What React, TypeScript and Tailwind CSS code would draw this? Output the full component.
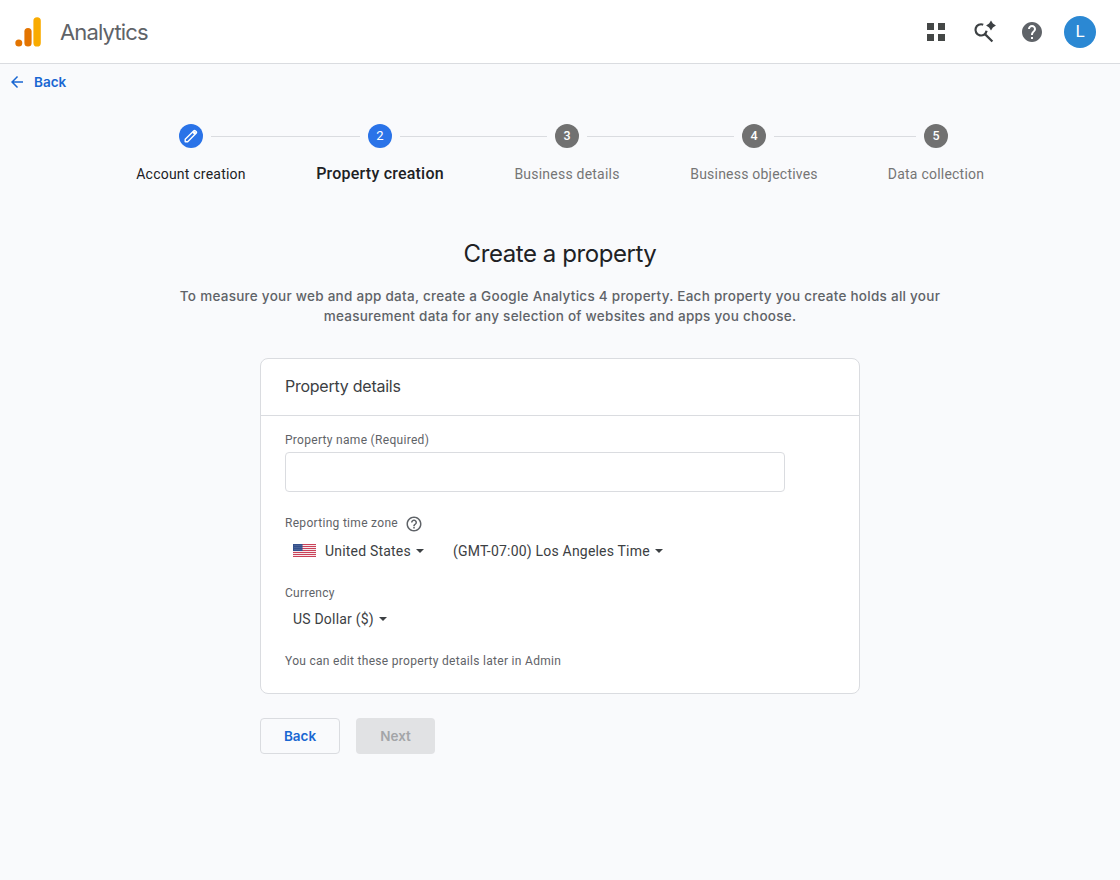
import { MdArrowBack, MdHelp, MdHelpOutline } from "react-icons/md";
import clsx from "clsx";

const STEPS = [
  { label: "Account creation", state: "done", line: "w-[149px]" },
  { label: "Property creation", state: "active", line: "w-[147px]" },
  { label: "Business details", state: "todo", line: "w-[147px]" },
  { label: "Business objectives", state: "todo", line: "w-[142px]" },
  { label: "Data collection", state: "todo", line: "" },
];

function Logo() {
  return (
    <svg width="28" height="32" viewBox="0 0 28 32" className="block">
      <rect x="19.4" y="1.2" width="7.4" height="29.4" rx="3.7" fill="#f9ab00" />
      <rect x="10.4" y="12" width="7.2" height="18.6" rx="3.6" fill="#e37400" />
      <circle cx="4.8" cy="27.1" r="3.5" fill="#e37400" />
    </svg>
  );
}

function AppsIcon() {
  return (
    <svg width="24" height="24" viewBox="0 0 24 24" fill="#444746">
      <path d="M3 3h7v7H3zM14 3h7v7h-7zM3 14h7v7H3zM14 14h7v7h-7z" />
    </svg>
  );
}

function SearchSparkIcon() {
  return (
    <svg width="24" height="24" viewBox="0 0 24 24">
      <path
        d="M11.2 4.7A5.6 5.6 0 1 0 14.6 10.8M13 14.1l7.4 7.4"
        fill="none"
        stroke="#3c4043"
        strokeWidth="2.2"
      />
      <path d="M19 .6l1.9 3 3 2-3 2-1.9 3-1.9-3-3-2 3-2z" fill="#3c4043" />
    </svg>
  );
}

function PencilIcon() {
  return (
    <svg width="14" height="14" viewBox="0 0 14 14" fill="none" stroke="#fff" strokeLinejoin="round">
      <path d="M1.2 12.8V10.3L9.9 1.7a1 1 0 0 1 1.3 0l1.1 1.1a1 1 0 0 1 0 1.3L3.7 12.8z" strokeWidth="1.4" />
      <path d="M9.1 2.7l2.2 2.2" strokeWidth="2.6" />
    </svg>
  );
}

function UsFlag() {
  return (
    <svg width="23" height="13" viewBox="0 0 23 13" className="mb-px block">
      <rect width="23" height="13" fill="#f6e9ec" />
      <path
        d="M0 .5h23M0 2.5h23M0 4.5h23M0 6.5h23M0 8.5h23M0 10.5h23M0 12.5h23"
        stroke="#cb4259"
        strokeWidth="1"
      />
      <rect width="9.5" height="7" fill="#34508c" />
      <path d="M1.5 1.5h7M1.5 3.5h7M1.5 5.5h7" stroke="#8290b4" strokeWidth=".6" strokeDasharray="1 1" />
    </svg>
  );
}

function Caret() {
  return (
    <svg width="8" height="4" viewBox="0 0 8 4" className="block" fill="#3c4043">
      <path d="M0 0h8L4 4z" />
    </svg>
  );
}

function Stepper() {
  return (
    <div className="ml-[179px] mt-6 flex h-[68px] items-start">
      {STEPS.map((step, i) => (
        <div key={step.label} className="flex items-start">
          <div className="flex w-6 flex-col items-center">
            <div
              className={clsx(
                "flex h-6 w-6 items-center justify-center rounded-full text-white",
                step.state === "todo" ? "bg-[#717171] text-[12.5px] font-medium" : "bg-[#2a73e8] text-[13px]"
              )}
            >
              {step.state === "done" ? <PencilIcon /> : i + 1}
            </div>
            <span
              className={clsx(
                "mt-4 whitespace-nowrap leading-5 tracking-[0.22px]",
                step.state === "done" && "text-sm text-[#202124]",
                step.state === "active" && "text-base font-medium text-[#202124]",
                step.state === "todo" && "text-sm text-[#757575]"
              )}
            >
              {step.label}
            </span>
          </div>
          {step.line && <div className={clsx("mx-2 mt-3 h-px bg-[#dadce0]", step.line)} />}
        </div>
      ))}
    </div>
  );
}

export default function App() {
  return (
    <div className="h-[880px] w-[1120px] overflow-hidden bg-[#f9fafc] font-['Roboto',sans-serif] text-[#3c4043]">
      {/* Header */}
      <header className="flex h-16 items-center border-b border-[#dadce0] bg-white pl-[14px] pr-6">
        <Logo />
        <span className="ml-[18px] font-['Inter',sans-serif] text-[22px] leading-7 tracking-[-0.85px] text-[#5f6368]">
          Analytics
        </span>
        <div className="ml-auto flex items-center gap-6">
          <AppsIcon />
          <SearchSparkIcon />
          <MdHelp size={24} className="text-[#5f6368]" />
          <div className="ml-[-4px] flex h-8 w-8 items-center justify-center rounded-full bg-[#2b88d3] pt-px text-[17px] text-white">
            L
          </div>
        </div>
      </header>

      <div className="flex h-9 items-center pl-2 text-[#1967d2]">
        <MdArrowBack size={18} />
        <span className="ml-2 font-['Inter',sans-serif] text-[13.5px] font-semibold">Back</span>
      </div>

      <Stepper />

      {/* Intro */}
      <div className="mt-[46px] flex flex-col items-center text-center font-['Inter',sans-serif]">
        <h1 className="text-2xl leading-8 tracking-[-0.43px] text-[#202124]">Create a property</h1>
        <p className="mt-4 whitespace-nowrap text-[13.5px] font-medium leading-5 tracking-[0.265px] text-[#5f6368]">
          To measure your web and app data, create a Google Analytics 4 property. Each property you create holds all your
          <br />
          measurement data for any selection of websites and apps you choose.
        </p>
      </div>

      {/* Property form */}
      <main className="mx-auto mt-8 w-[600px]">
        <section className="h-[336px] rounded-lg border border-[#dadce0] bg-white">
          <h2 className="flex h-[57px] items-center border-b border-[#dadce0] px-6 pb-0.5 font-['Inter',sans-serif] text-base tracking-[-0.25px]">
            Property details
          </h2>
          <div className="px-6 pt-4 text-xs leading-4 tracking-[0.3px] text-[#5f6368]">
            <label className="block" htmlFor="property-name">
              Property name (Required)
            </label>
            <input
              id="property-name"
              className="mt-1 block h-10 w-[500px] rounded border border-[#dadce0] bg-white px-3 outline-none"
            />
            <div className="mt-[23px] flex h-[18px] items-center">
              <span className="pb-0.5">Reporting time zone</span>
              <MdHelpOutline size={18} className="ml-[7px]" />
            </div>
            <div className="mt-2 flex h-5 items-center pl-2 text-sm tracking-[0.2px] text-[#3c4043]">
              <UsFlag />
              <span className="ml-[9px]">United States</span>
              <span className="ml-[5px]">
                <Caret />
              </span>
              <span className="ml-[29px]">(GMT-07:00) Los Angeles Time</span>
              <span className="ml-[5px]">
                <Caret />
              </span>
            </div>
            <div className="mt-6">Currency</div>
            <div className="mt-2 flex h-5 items-center pl-2 text-sm tracking-[0.2px] text-[#3c4043]">
              <span>US Dollar ($)</span>
              <span className="ml-[5px]">
                <Caret />
              </span>
            </div>
            <p className="mt-6">You can edit these property details later in Admin</p>
          </div>
        </section>

        <div className="mt-6 flex gap-4 font-['Inter',sans-serif] text-[13.5px] font-semibold">
          <button className="h-9 w-20 rounded border border-[#dadce0] text-[#1967d2]">Back</button>
          <button className="h-9 w-[79px] rounded bg-[#e1e2e4] text-[#a3a5a8]" disabled>
            Next
          </button>
        </div>
      </main>
    </div>
  );
}
